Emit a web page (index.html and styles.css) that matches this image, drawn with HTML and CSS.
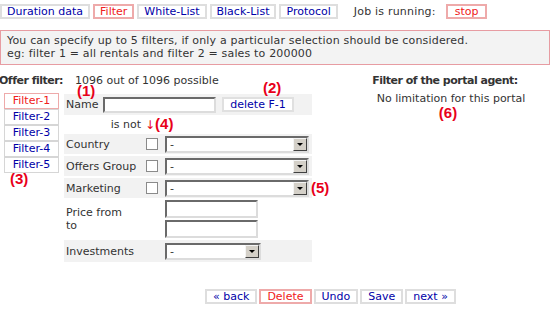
FILE: index.html
```html
<!DOCTYPE html>
<html lang="en">
  <head>
    <meta charset="UTF-8" />
    <title>Offer filter</title>
    <link rel="stylesheet" href="styles.css">
  </head>
  <body>
    <div class="tabs">
      <a class="tab">Duration data</a>
      <a class="tab active">Filter</a>
      <a class="tab">White-List</a>
      <a class="tab">Black-List</a>
      <a class="tab">Protocol</a>
      <span class="job">Job is running:</span>
      <a class="tab active stop">stop</a>
    </div>

    <div class="info">
      You can specify up to 5 filters, if only a particular selection should be considered.<br />
      eg: filter 1 = all rentals and filter 2 = sales to 200000
    </div>

    <div class="main">
      <div class="left">
        <div class="offer"><b>Offer filter:</b><span class="count">1096 out of 1096 possible</span></div>
        <div class="editor">
          <div class="filters">
            <a class="fl active">Filter-1</a>
            <a class="fl">Filter-2</a>
            <a class="fl">Filter-3</a>
            <a class="fl">Filter-4</a>
            <a class="fl">Filter-5</a>
            <span class="note n3">(3)</span>
          </div>

          <div class="form">
            <div class="namerow">
              <span class="n1 note over">(1)</span>
              <span class="n2 note over">(2)</span>
              <label class="namelbl">Name</label>
              <input type="text" class="field name" />
              <a class="btn">delete F-1</a>
            </div>
            <table class="rows">
              <tr class="isnot">
                <td class="lbl right">is not</td>
                <td class="chk"><span class="arrow">&darr;</span><span class="note">(4)</span></td>
                <td></td>
              </tr>
              <tr class="grey">
                <td class="lbl">Country</td>
                <td class="chk"><span class="box"></span></td>
                <td><div class="select"><span class="val">-</span><span class="drop"></span></div></td>
              </tr>
              <tr class="grey">
                <td class="lbl">Offers Group</td>
                <td class="chk"><span class="box"></span></td>
                <td><div class="select"><span class="val">-</span><span class="drop"></span></div></td>
              </tr>
              <tr class="grey">
                <td class="lbl">Marketing</td>
                <td class="chk"><span class="box"></span></td>
                <td class="mark">
                  <div class="select"><span class="val">-</span><span class="drop"></span></div>
                  <span class="note n5 over">(5)</span>
                </td>
              </tr>
              <tr class="price">
                <td class="lbl" colspan="2">Price from<br />to</td>
                <td>
                  <input type="text" class="field range" />
                  <input type="text" class="field range" />
                </td>
              </tr>
              <tr class="grey inv">
                <td class="lbl" colspan="2">Investments</td>
                <td><div class="select small"><span class="val">-</span><span class="drop"></span></div></td>
              </tr>
            </table>
          </div>
        </div>
      </div>

      <div class="agent">
        <b>Filter of the portal agent:</b>
        <p>No limitation for this portal</p>
        <span class="note">(6)</span>
      </div>
    </div>

    <div class="actions">
      <a class="tab">&laquo; back</a>
      <a class="tab active">Delete</a>
      <a class="tab">Undo</a>
      <a class="tab">Save</a>
      <a class="tab">next &raquo;</a>
    </div>
  </body>
</html>
```

FILE: styles.css
```css
body {
  margin: 0;
  font-family: "DejaVu Sans", Verdana, sans-serif;
  font-size: 11px;
  color: #333;
  background: #fff;
}
b {
  letter-spacing: -0.5px;
}
.tabs {
  display: flex;
  align-items: center;
  margin-top: 4px;
}
.tab {
  display: inline-block;
  border: 2px solid #dedede;
  padding: 0 5px;
  margin-right: 3px;
  line-height: 11px;
  color: #0000a8;
  white-space: nowrap;
}
.tab.active {
  border-color: #eeaaaa;
  color: #f02020;
}
.tab.stop {
  padding: 0 7px;
}
.job {
  margin: 0 10px 0 13px;
  letter-spacing: 0.2px;
}
.info {
  margin-top: 11px;
  border: 1px solid #e79ca2;
  background: #f3f3f3;
  padding: 3px 6px 4px;
  line-height: 13px;
  letter-spacing: 0.17px;
}
.main {
  display: flex;
}
.left {
  width: 340px;
}
.offer {
  margin-top: 9px;
  line-height: 13px;
  white-space: nowrap;
}
.offer b {
  margin-left: -1px;
}
.count {
  margin-left: 12px;
}
.editor {
  display: flex;
  margin-top: 6px;
}
.filters {
  display: flex;
  flex-direction: column;
  width: 55px;
  margin-left: 4px;
}
.fl {
  border: 1px solid #d6d6d6;
  height: 14px;
  line-height: 14px;
  text-align: center;
  color: #0000a8;
}
.fl.active {
  border-color: #eeaaaa;
  color: #f02020;
}
.note {
  font-family: "Liberation Sans", Arial, sans-serif;
  font-weight: bold;
  font-size: 15px;
  line-height: 13px;
  color: #e8001a;
}
.over {
  position: absolute;
}
.n3 {
  margin: -1px 0 0 6px;
}
.form {
  margin-left: 5px;
  width: 248px;
}
.namerow {
  position: relative;
  display: flex;
  align-items: center;
  height: 21px;
  margin-top: 1px;
  background: #f2f2f2;
}
.n1 {
  left: 13px;
  top: -10px;
}
.n2 {
  left: 199px;
  top: -13px;
}
.namelbl {
  width: 37px;
  padding-left: 2px;
}
.field {
  box-sizing: border-box;
  height: 17px;
  margin: 0;
  padding: 0 2px;
  border: 2px solid;
  border-color: #6a6a6a #dcdcdc #dcdcdc #6a6a6a;
  background: #fff;
  font: inherit;
}
.field.name {
  width: 113px;
  height: 16px;
}
.btn {
  margin-left: 6px;
  width: 72px;
  box-sizing: border-box;
  border: 2px solid #e0e0e0;
  background: #fff;
  color: #0000a8;
  text-align: center;
  line-height: 11px;
}
.rows {
  table-layout: fixed;
  border-collapse: separate;
  border-spacing: 0 2px;
  width: 248px;
  margin-top: 0;
}
.rows td {
  padding: 0;
  white-space: nowrap;
  line-height: 13px;
}
.lbl {
  width: 75px;
  padding-left: 2px !important;
}
.right {
  text-align: right;
  padding-right: 2px;
}
.isnot td {
  height: 15px;
}
.grey td {
  background: #f2f2f2;
  height: 20px;
}
.inv td {
  height: 22px;
}
.chk {
  width: 22px;
}
.box {
  display: block;
  width: 10px;
  height: 10px;
  margin-left: 5px;
  border: 1px solid #8a8a8a;
  background: #fff;
}
.arrow {
  color: #e8001a;
  font-size: 12px;
  margin-left: 4px;
}
.select {
  display: flex;
  align-items: center;
  box-sizing: border-box;
  width: 144px;
  height: 17px;
  margin-left: 2px;
  border: 2px solid;
  border-color: #6a6a6a #dcdcdc #dcdcdc #6a6a6a;
  background: #fff;
}
.select.small {
  width: 96px;
}
.val {
  flex: 1;
  padding-left: 3px;
  line-height: 13px;
}
.drop {
  position: relative;
  width: 12px;
  height: 11px;
  border: 1px solid;
  border-color: #f4f4f4 #404040 #404040 #f4f4f4;
  background: #d4d0c8;
}
.drop::after {
  content: "";
  position: absolute;
  left: 3px;
  top: 4px;
  border: 3px solid transparent;
  border-top: 3px solid #000;
  border-bottom: 0;
}
.mark {
  position: relative;
}
.n5 {
  left: 148px;
  top: 3px;
}
.price td {
  height: 38px;
}
.field.range {
  display: block;
  width: 93px;
  margin: 0 0 2px 2px;
  height: 18px;
}
.field.range:last-child {
  margin-bottom: 0;
}
.agent {
  flex: 1;
  text-align: center;
  padding-top: 9px;
  line-height: 13px;
}
.agent p {
  margin: 5px 0 0 12px;
}
.agent .note {
  display: block;
  margin: 1px 0 0 6px;
}
.actions {
  display: flex;
  margin: 25px 0 0 205px;
}
.actions .tab {
  margin-right: 2px;
  padding: 0 6px;
}
```
